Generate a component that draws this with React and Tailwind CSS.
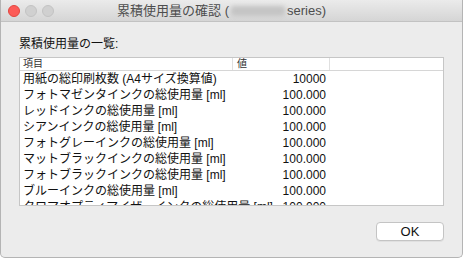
import React from "react";

const rows = [
  ["用紙の総印刷枚数 (A4サイズ換算値)", "10000"],
  ["フォトマゼンタインクの総使用量 [ml]", "100.000"],
  ["レッドインクの総使用量 [ml]", "100.000"],
  ["シアンインクの総使用量 [ml]", "100.000"],
  ["フォトグレーインクの総使用量 [ml]", "100.000"],
  ["マットブラックインクの総使用量 [ml]", "100.000"],
  ["フォトブラックインクの総使用量 [ml]", "100.000"],
  ["ブルーインクの総使用量 [ml]", "100.000"],
  ["クロマオプティマイザーインクの総使用量 [ml]", "100.000"],
];

export default function App() {
  return (
    <div
      className="w-[463px] h-[258px] overflow-hidden bg-[#ececec] border-x border-b border-[#b4b4b4] rounded-b-[5px] flex flex-col text-[#1a1a1a]"
      style={{ fontFamily: '"Liberation Sans", "Noto Sans CJK JP", sans-serif' }}
    >
      <div className="relative h-[22px] shrink-0 bg-gradient-to-b from-[#ebebeb] to-[#d5d5d5] border-b border-[#c2c2c2] flex items-center">
        <div className="flex items-center gap-[5px] pl-[7px]">
          <div className="w-[12px] h-[12px] rounded-full bg-[#fc5b57] border border-[#e2463f]" />
          <div className="w-[12px] h-[12px] rounded-full bg-[#d0d0d0] border border-[#c3c3c3]" />
          <div className="w-[12px] h-[12px] rounded-full bg-[#d0d0d0] border border-[#c3c3c3]" />
        </div>
        <div className="absolute inset-0 pr-[20px] flex items-center justify-center text-[13px] text-[#4d4d4d]">
          <span>累積使用量の確認 (</span>
          <span className="inline-block w-[54px] h-[10px] mx-[2px] rounded-[3px] bg-[#c4c4c4] blur-[2px]" />
          <span>series)</span>
        </div>
      </div>
      <div className="flex-1 flex flex-col px-[18px]">
        <div className="pt-[14px] text-[12px] leading-[16px] text-[#111]">累積使用量の一覧:</div>
        <div className="mt-[5px] h-[149px] bg-white border border-[#c6c6c6] overflow-hidden">
          <div className="h-[13px] flex border-b border-[#d6d6d6] text-[10px] leading-[12px] text-[#333]">
            <div className="w-[213px] pl-[3px] border-r border-[#e0e0e0]">項目</div>
            <div className="w-[97px] pl-[4px] border-r border-[#e0e0e0]">値</div>
            <div className="flex-1" />
          </div>
          {rows.map(([k, v], i) => (
            <div key={i} className="h-[16px] flex items-center text-[12px] leading-[16px] text-[#111]">
              <div className="w-[213px] pl-[3px] whitespace-nowrap">{k}</div>
              <div className="w-[93px] text-right">{v}</div>
            </div>
          ))}
        </div>
        <div className="mt-[16px] flex justify-end">
          <button className="w-[68px] h-[19px] bg-white border border-[#c4c4c4] rounded-[4px] text-[13px] leading-[17px] text-[#111] shadow-[0_1px_0_rgba(0,0,0,0.05)]">
            OK
          </button>
        </div>
      </div>
    </div>
  );
}
